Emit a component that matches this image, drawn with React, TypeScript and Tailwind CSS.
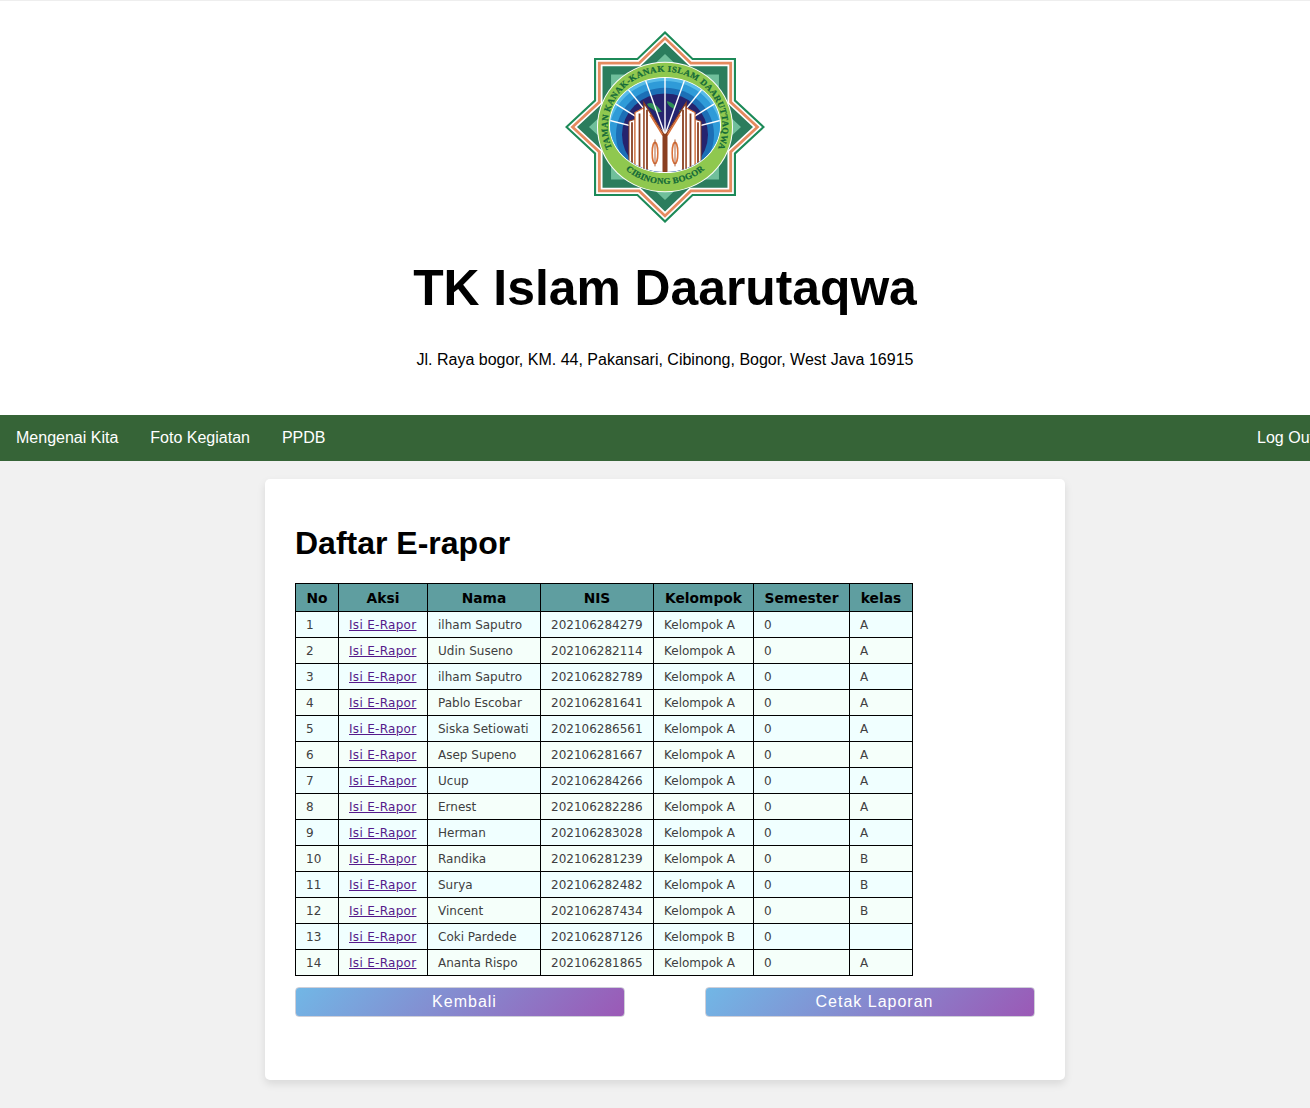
const rows = [
  { no: 1, nama: "ilham Saputro", nis: "202106284279", kelompok: "Kelompok A", kelas: "A" },
  { no: 2, nama: "Udin Suseno", nis: "202106282114", kelompok: "Kelompok A", kelas: "A" },
  { no: 3, nama: "ilham Saputro", nis: "202106282789", kelompok: "Kelompok A", kelas: "A" },
  { no: 4, nama: "Pablo Escobar", nis: "202106281641", kelompok: "Kelompok A", kelas: "A" },
  { no: 5, nama: "Siska Setiowati", nis: "202106286561", kelompok: "Kelompok A", kelas: "A" },
  { no: 6, nama: "Asep Supeno", nis: "202106281667", kelompok: "Kelompok A", kelas: "A" },
  { no: 7, nama: "Ucup", nis: "202106284266", kelompok: "Kelompok A", kelas: "A" },
  { no: 8, nama: "Ernest", nis: "202106282286", kelompok: "Kelompok A", kelas: "A" },
  { no: 9, nama: "Herman", nis: "202106283028", kelompok: "Kelompok A", kelas: "A" },
  { no: 10, nama: "Randika", nis: "202106281239", kelompok: "Kelompok A", kelas: "B" },
  { no: 11, nama: "Surya", nis: "202106282482", kelompok: "Kelompok A", kelas: "B" },
  { no: 12, nama: "Vincent", nis: "202106287434", kelompok: "Kelompok A", kelas: "B" },
  { no: 13, nama: "Coki Pardede", nis: "202106287126", kelompok: "Kelompok B", kelas: "" },
  { no: 14, nama: "Ananta Rispo", nis: "202106281865", kelompok: "Kelompok A", kelas: "A" },
];

const columns = [
  { label: "No", width: "w-[43px]" },
  { label: "Aksi", width: "w-[89px]" },
  { label: "Nama", width: "w-[113px]" },
  { label: "NIS", width: "w-[113px]" },
  { label: "Kelompok", width: "w-[100px]" },
  { label: "Semester", width: "w-[96px]" },
  { label: "kelas", width: "w-[63px]" },
];

const starPoints =
  "0,-100 28,-72 71,-72 71,-28 100,0 71,28 71,72 28,72 0,100 -28,72 -71,72 -71,28 -100,0 -71,-28 -71,-72 -28,-72";

const starLayers = [
  { scale: 1, fill: "#1c8a58" },
  { scale: 0.97, fill: "#ffffff" },
  { scale: 0.945, fill: "#e58a5f" },
  { scale: 0.905, fill: "#ffffff" },
  { scale: 0.88, fill: "#2b7d5d" },
  { scale: 0.76, fill: "#70bf9b" },
];

const skyBands = [
  { r: 68, fill: "#b5e2f3" },
  { r: 62, fill: "#58bbe8" },
  { r: 56, fill: "#2f9bd8" },
  { r: 49, fill: "#1c6fb6" },
  { r: 43, fill: "#25246f" },
];

// left half of the building, the right half is mirrored
function BuildingHalf({ flip }: { flip?: boolean }) {
  return (
    <g transform={flip ? "scale(-1 1)" : undefined}>
      <polygon points="-36,-6 -30,-8 -30,44 -36,36" fill="#fff" stroke="#8a3f20" strokeWidth="1" />
      <polygon points="-30,-15 -21,-20 -21,46 -30,44" fill="#fff" stroke="#d9713a" strokeWidth="1.2" />
      <polygon points="-21,-25 -1,8 -1,52 -21,48" fill="#fff" stroke="#8a3f20" strokeWidth="1.4" />
      <path d="M-33 -5V40M-25.500 -14V46M-18 -18V48" stroke="#8a3f20" strokeWidth="1.8" />
      <path d="M-15 -13L-2 9" stroke="#d9713a" strokeWidth="1.6" />
      <ellipse cx="-10" cy="27" rx="2.8" ry="11" fill="none" stroke="#d9713a" strokeWidth="1.6" />
      <path d="M-10 13V41" stroke="#a34d24" strokeWidth="0.9" />
    </g>
  );
}

function Logo() {
  return (
    <svg viewBox="-100 -96 200 192" className="h-[192px] w-[200px]">
      <defs>
        <clipPath id="sky">
          <ellipse cx="0" cy="-2" rx="55" ry="49" />
        </clipPath>
        <path id="topArc" d="M-49 30A57.500 57.500 0 1 1 49 30" fill="none" />
        <path id="bottomArc" d="M-42 42A59.500 59.500 0 0 0 42 42" fill="none" />
      </defs>
      <g transform="scale(1 0.96)">
        {starLayers.map((layer) => (
          <polygon
            key={layer.scale}
            points={starPoints}
            fill={layer.fill}
            transform={`scale(${layer.scale})`}
          />
        ))}
        <circle r="68" fill="#fff" />
        <circle r="67" fill="#8fc84f" />
        <ellipse cx="0" cy="-2" rx="56" ry="50" fill="#fff" />
        <g clipPath="url(#sky)">
          <rect x="-60" y="-55" width="120" height="110" fill="#fff" />
          {skyBands.map((band) => (
            <circle key={band.r} cx="0" cy="8" r={band.r} fill={band.fill} />
          ))}
          <path
            d="M-18 -24C-12 -28 -6 -20 -3 -16L-8 -15C-12 -20 -16 -19 -18 -24ZM2 -27C8 -25 12 -22 9 -19C5 -21 2 -23 2 -27ZM14 -18C19 -17 22 -14 21 -10C17 -12 15 -14 14 -18Z"
            fill="#2f8f57"
          />
          {[-75, -57, -38, -19, 0, 19, 38, 57, 75].map((deg) => (
            <line
              key={deg}
              x1="0"
              y1="8"
              x2="0"
              y2="-60"
              stroke="#fff"
              strokeWidth="1.4"
              transform={`rotate(${deg} 0 8)`}
            />
          ))}
          <BuildingHalf />
          <BuildingHalf flip />
          <rect x="-2.500" y="7" width="5" height="46" fill="#8a3f20" />
        </g>
        <g
          className="font-['Liberation_Serif',serif]"
          fontWeight="700"
          fill="#146a38"
          stroke="#146a38"
          strokeWidth="0.25"
        >
          <text fontSize="9">
            <textPath href="#topArc" startOffset="50%" textAnchor="middle" textLength="226">
              TAMAN KANAK-KANAK ISLAM DAARUTTAQWA
            </textPath>
          </text>
          <text fontSize="9">
            <textPath href="#bottomArc" startOffset="50%" textAnchor="middle" textLength="86">
              CIBINONG BOGOR
            </textPath>
          </text>
        </g>
      </g>
    </svg>
  );
}

function ActionButton({ label }: { label: string }) {
  return (
    <button className="h-[30px] w-[330px] rounded-[4px] border border-[#cfcfd8] bg-[linear-gradient(135deg,#71b7e6,#9b59b6)] pl-[9px] text-center text-base tracking-[1px] text-white">
      {label}
    </button>
  );
}

export default function App() {
  return (
    <div className="w-full overflow-hidden">
      {/* page is a bit wider than the window, Log Out runs off the edge */}
      <div className="min-h-[1108px] w-[1330px] bg-[#f1f1f1] font-['Liberation_Sans',Arial,sans-serif] text-black">
        {/* Header */}
        <header className="flex h-[415px] flex-col items-center border-t border-[#eeeeee] bg-white">
          <div className="mt-[30px] flex h-[192px] items-center">
            <Logo />
          </div>
          <h1 className="mt-[37px] text-[49.8px] leading-[56px] font-bold">TK Islam Daarutaqwa</h1>
          <p className="mt-[35px] text-base leading-[18px]">
            Jl. Raya bogor, KM. 44, Pakansari, Cibinong, Bogor, West Java 16915
          </p>
        </header>

        {/* Nav */}
        <nav className="flex h-[46px] items-center bg-[#366437] text-base text-white">
          <a className="px-4">Mengenai Kita</a>
          <a className="px-4">Foto Kegiatan</a>
          <a className="px-4">PPDB</a>
          <a className="ml-auto px-4">Log Out</a>
        </nav>

        {/* Card */}
        <main className="mx-auto mt-[18px] h-[601px] w-[800px] rounded-[5px] bg-white px-[30px] pt-[46px] shadow-[0_4px_8px_rgba(0,0,0,0.1)]">
          <h2 className="text-[32px] leading-[37px] font-bold">Daftar E-rapor</h2>
          <table className="mt-[21px] table-fixed border-collapse font-['DejaVu_Sans',Verdana,sans-serif] text-xs">
            <thead>
              <tr className="h-[28px] bg-[#5f9ea0]">
                {columns.map((col) => (
                  <th key={col.label} className={`${col.width} border border-black pt-[2px] text-center text-[13.8px] font-bold`}>
                    {col.label}
                  </th>
                ))}
              </tr>
            </thead>
            <tbody>
              {rows.map((row) => (
                <tr key={row.no} className="h-[26px] text-[#404040] odd:bg-[#f0ffff] even:bg-[#f5fffa]">
                  <td className="border border-black px-[10px]">{row.no}</td>
                  <td className="border border-black px-[10px]">
                    <a className="tracking-[0.3px] text-[#551a8b] underline">Isi E-Rapor</a>
                  </td>
                  <td className="border border-black px-[10px] whitespace-nowrap">{row.nama}</td>
                  <td className="border border-black px-[10px]">{row.nis}</td>
                  <td className="border border-black px-[10px] whitespace-nowrap">{row.kelompok}</td>
                  <td className="border border-black px-[10px]">0</td>
                  <td className="border border-black px-[10px]">{row.kelas}</td>
                </tr>
              ))}
            </tbody>
          </table>
          <div className="mt-[11px] flex gap-[80px]">
            <ActionButton label="Kembali" />
            <ActionButton label="Cetak Laporan" />
          </div>
        </main>
      </div>
    </div>
  );
}
